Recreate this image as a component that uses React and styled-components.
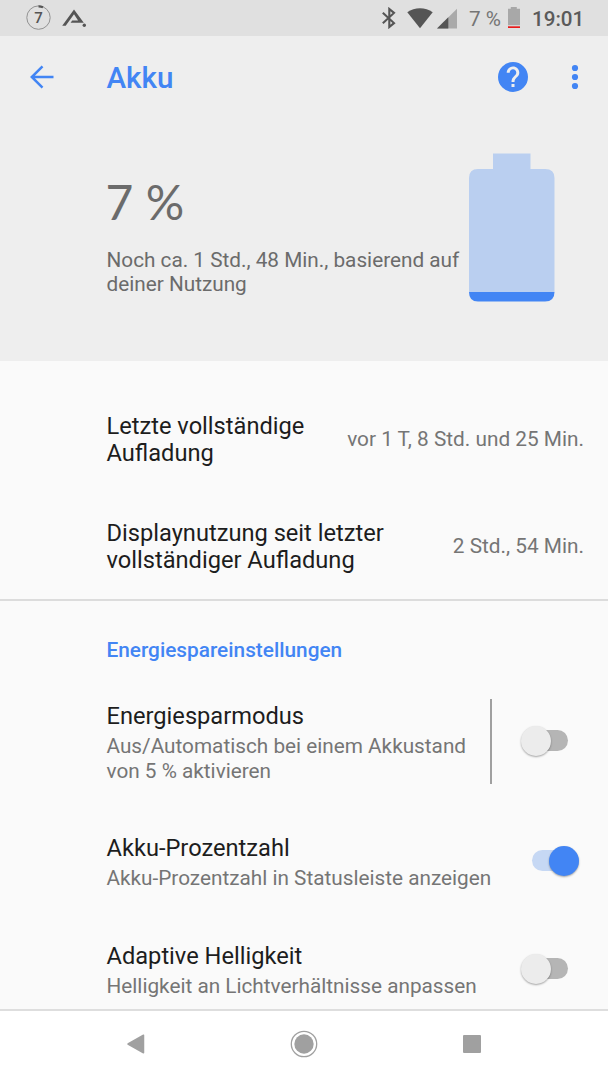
import styled, { createGlobalStyle } from "styled-components";
import { useState } from "react";

const GlobalStyle = createGlobalStyle`
  * {
    box-sizing: border-box;
  }
  body {
    margin: 0;
    background-color: #fafafa;
    font-family: Roboto, "Liberation Sans", sans-serif;
    overflow: hidden;
  }
`;

const Container = styled.div`
  width: 608px;
  height: 1080px;
  display: flex;
  flex-direction: column;
  background-color: #fafafa;
  overflow: hidden;
`;

const StatusBar = styled.div`
  height: 35.5px;
  flex-shrink: 0;
  display: flex;
  align-items: flex-start;
  justify-content: space-between;
  padding: 0 25px 0 26px;
  background-color: #e0e0e0;
  color: #5a5a5a;
`;

const StatusGroup = styled.div`
  height: 36px;
  display: flex;
  align-items: center;
`;

const StatusIcon = styled.svg`
  display: block;
  flex-shrink: 0;
  margin-right: ${(props) => props.$gap || 0}px;
`;

const StatusPercent = styled.span`
  width: 38px;
  font-size: 20.7px;
  line-height: 24px;
  white-space: nowrap;
  color: #757575;
  padding-top: 1px;
`;

const Clock = styled.span`
  width: 51px;
  font-size: 20.6px;
  font-weight: 500;
  line-height: 24px;
  padding-top: 1px;
`;

const Header = styled.header`
  height: 325.5px;
  flex-shrink: 0;
  background-color: #eeeeee;
`;

const Toolbar = styled.div`
  height: 82px;
  display: flex;
  align-items: center;
  padding: 0 20.5px 0 24px;
`;

const IconButton = styled.button`
  width: ${(props) => props.$size || 36}px;
  height: 36px;
  display: flex;
  align-items: center;
  justify-content: center;
  border: none;
  padding: 0;
  background: none;
  color: #4285f4;
  cursor: pointer;
`;

const Title = styled.h1`
  flex: 1;
  margin: 3px 0 0 46.5px;
  font-size: 29.6px;
  font-weight: 500;
  line-height: 36px;
  color: #4285f4;
`;

const Actions = styled.div`
  display: flex;
  gap: 32px;
`;

const Summary = styled.div`
  display: flex;
  justify-content: space-between;
  padding: 35.5px 53px 0 106.5px;
`;

const SummaryText = styled.div`
  width: 360px;
  padding-top: 20px;
`;

const Level = styled.div`
  font-family: Lato, Roboto, sans-serif;
  font-size: 48px;
  line-height: 58px;
  color: #6b6b6b;
  margin-left: -1px;
`;

const Estimate = styled.p`
  margin: 17px 0 0;
  font-size: 20.75px;
  line-height: 24.4px;
  color: #6b6b6b;
`;

const Battery = styled.svg`
  display: block;
  flex-shrink: 0;
`;

const Usage = styled.section`
  height: 240px;
  flex-shrink: 0;
  padding-top: 25px;
  border-bottom: 2px solid #dcdcdc;
`;

const UsageRow = styled.div`
  height: 107px;
  display: flex;
  align-items: center;
  justify-content: space-between;
  padding: 0 24px 0 106.5px;
`;

const UsageLabel = styled.div`
  width: ${(props) => props.$width}px;
  padding-top: 1px;
  font-size: 23.65px;
  line-height: 27.5px;
  color: #1d1d1d;
`;

const UsageValue = styled.div`
  font-size: 20.8px;
  line-height: 24px;
  padding-bottom: 1px;
  white-space: nowrap;
  color: #757575;
`;

const Settings = styled.section`
  flex: 1;
  min-height: 0;
  overflow: hidden;
`;

const SectionTitle = styled.h2`
  margin: 0;
  padding: 37px 0 0 106.5px;
  height: 87px;
  font-size: 20.8px;
  font-weight: 500;
  line-height: 24px;
  color: #4285f4;
`;

const SettingRow = styled.div`
  height: ${(props) => props.$height}px;
  display: flex;
  align-items: center;
  justify-content: space-between;
  padding: 0 24px 0 106.5px;
`;

const SettingText = styled.div`
  flex: 1;
  min-width: 0;
  padding-top: 2px;
`;

const SettingName = styled.div`
  font-size: 23.65px;
  line-height: 28px;
  color: #1d1d1d;
`;

const SettingHint = styled.div`
  margin-top: 4px;
  font-size: 20.75px;
  line-height: 24.3px;
  color: #757575;
`;

const ToggleArea = styled.div`
  height: 85px;
  flex-shrink: 0;
  display: flex;
  align-items: center;
  border-left: 2px solid ${(props) => (props.$divided ? "#a0a0a0" : "transparent")};
`;

const Toggle = styled.button`
  width: ${(props) => (props.$on ? 69 : 76)}px;
  height: 34px;
  display: flex;
  align-items: center;
  justify-content: flex-end;
  margin-right: ${(props) => (props.$on ? 5 : 16)}px;
  border: none;
  padding: 0 0 2px;
  background: none;
  cursor: pointer;
`;

const Track = styled.span`
  width: 47px;
  height: 21px;
  display: flex;
  align-items: center;
  justify-content: ${(props) => (props.$on ? "flex-end" : "flex-start")};
  border-radius: 11px;
  background: ${(props) =>
    props.$on ? "#c6d8f4" : "linear-gradient(90deg, transparent 15px, #b5b5b5 15px)"};
`;

const Thumb = styled.span`
  width: 30px;
  height: 30px;
  flex-shrink: 0;
  border-radius: 50%;
  background-color: ${(props) => (props.$on ? "#4285f4" : "#ececec")};
  box-shadow: 0 1px 2px rgba(0, 0, 0, 0.35);
`;

const NavBar = styled.nav`
  height: 71px;
  flex-shrink: 0;
  display: flex;
  align-items: center;
  justify-content: space-between;
  padding: 0 122px 3px 121px;
  border-top: 2px solid #dedede;
  background-color: #ffffff;
`;

const NavButton = styled.button`
  width: 28px;
  height: 28px;
  border: none;
  padding: 0;
  background: none;
  cursor: pointer;

  svg {
    display: block;
  }
`;

const usage = [
  {
    label: "Letzte vollständige Aufladung",
    value: "vor 1 T, 8 Std. und 25 Min.",
    width: 215,
  },
  {
    label: "Displaynutzung seit letzter vollständiger Aufladung",
    value: "2 Std., 54 Min.",
    width: 300,
  },
];

const settings = [
  {
    id: "saver",
    name: "Energiesparmodus",
    hint: "Aus/Automatisch bei einem Akkustand von 5 % aktivieren",
    height: 107,
    divided: true,
  },
  {
    id: "percent",
    name: "Akku-Prozentzahl",
    hint: "Akku-Prozentzahl in Statusleiste anzeigen",
    height: 133,
  },
  {
    id: "brightness",
    name: "Adaptive Helligkeit",
    hint: "Helligkeit an Lichtverhältnisse anpassen",
    height: 83,
  },
];

const App = () => {
  const [enabled, setEnabled] = useState({ percent: true });

  const handleToggle = (id) => {
    setEnabled({ ...enabled, [id]: !enabled[id] });
  };

  return (
    <Container>
      <GlobalStyle />
      <StatusBar>
        <StatusGroup>
          <StatusIcon width="25" height="26" viewBox="0 0 25 26" $gap={11}>
            <circle cx="12.5" cy="12.6" r="11.7" fill="none" stroke="#929292" strokeWidth="1" />
            <path d="M12.5 1.4A11.4 11.4 0 0 1 17 2.3" fill="none" stroke="#555" strokeWidth="2.2" />
            <text x="12.4" y="17.8" textAnchor="middle" fontSize="15" fontWeight="500" fill="#555">
              7
            </text>
          </StatusIcon>
          <StatusIcon width="25" height="19" viewBox="0 0 25 19">
            <path
              d="M12 .5 21.8 13.8H8.600L10.200 11.400H16.100L12 5.300 3.700 16.800H.2Z"
              fill="#555"
            />
            <circle cx="22.300" cy="16.200" r="1.700" fill="#555" />
          </StatusIcon>
        </StatusGroup>
        <StatusGroup>
          <StatusIcon width="14" height="22" viewBox="0 0 14 22" $gap={11}>
            <path
              d="M.8 5.700 12 16.100 7.300 20V2L12 5.900.8 16.300"
              fill="none"
              stroke="#555"
              strokeWidth="2.100"
            />
          </StatusIcon>
          <StatusIcon width="26" height="21" viewBox="0 0 26 21" $gap={4}>
            <path d="M.3 4.200C7.500-1 18.500-1 25.700 4.200L13 20.300Z" fill="#555" />
          </StatusIcon>
          <StatusIcon width="21" height="21" viewBox="0 0 21 21" $gap={11}>
            <path d="M0 20.500 20 .700V20.500Z" fill="#aaa" />
            <path d="M0 20.500 11.300 9.300V20.500Z" fill="#555" />
          </StatusIcon>
          <StatusPercent>7 %</StatusPercent>
          <StatusIcon width="13" height="22" viewBox="0 0 13 22" $gap={12}>
            <path d="M3.800 0H9.800V1.700H13V18.300H1V1.700H3.800Z" fill="#a8a8a8" />
            <path d="M1 19.300H13V21H1Z" fill="#e81b1b" />
          </StatusIcon>
          <Clock>19:01</Clock>
        </StatusGroup>
      </StatusBar>

      <Header>
        <Toolbar>
          <IconButton>
            <svg width="24" height="24" viewBox="0 0 24 24">
              <path
                d="M23.500 12H2M12.500 1.300 1.800 12 12.500 22.700"
                fill="none"
                stroke="currentColor"
                strokeWidth="2.500"
              />
            </svg>
          </IconButton>
          <Title>Akku</Title>
          <Actions>
            <IconButton>
              <svg width="36" height="36" viewBox="0 0 24 24" fill="currentColor">
                <path
                  fillRule="evenodd"
                  d="M12 2a10 10 0 1 0 0 20 10 10 0 0 0 0-20zM11 16.600h2v2h-2zM11 15.300h2c0-3 3.200-3.300 3.200-6.200C16.200 6.800 14.300 5 12 5S7.800 6.800 7.800 9.100h2C9.800 7.900 10.800 6.900 12 6.900s2.200 1 2.200 2.200C14.200 11.100 11 11.500 11 15.300z"
                />
              </svg>
            </IconButton>
            <IconButton $size={25}>
              <svg width="8" height="26" viewBox="0 0 8 26" fill="currentColor">
                <circle cx="4" cy="4" r="3.100" />
                <circle cx="4" cy="13" r="3.100" />
                <circle cx="4" cy="22" r="3.100" />
              </svg>
            </IconButton>
          </Actions>
        </Toolbar>
        <Summary>
          <SummaryText>
            <Level>7 %</Level>
            <Estimate>Noch ca. 1 Std., 48 Min., basierend auf deiner Nutzung</Estimate>
          </SummaryText>
          <Battery width="86" height="149" viewBox="0 0 86 149">
            <path
              d="M24 .500H61.500V16H76Q85.500 16 85.500 25V139H0V25Q0 16 9 16H24Z"
              fill="#bacff0"
            />
            <path d="M0 139H85.500Q85.500 148.500 76 148.500H9Q0 148.500 0 139Z" fill="#4285f4" />
          </Battery>
        </Summary>
      </Header>

      <Usage>
        {usage.map((item) => (
          <UsageRow key={item.label}>
            <UsageLabel $width={item.width}>{item.label}</UsageLabel>
            <UsageValue>{item.value}</UsageValue>
          </UsageRow>
        ))}
      </Usage>

      <Settings>
        <SectionTitle>Energiespareinstellungen</SectionTitle>
        {settings.map((item) => (
          <SettingRow key={item.id} $height={item.height}>
            <SettingText>
              <SettingName>{item.name}</SettingName>
              <SettingHint>{item.hint}</SettingHint>
            </SettingText>
            <ToggleArea $divided={item.divided}>
              <Toggle $on={enabled[item.id]} onClick={() => handleToggle(item.id)}>
                <Track $on={enabled[item.id]}>
                  <Thumb $on={enabled[item.id]} />
                </Track>
              </Toggle>
            </ToggleArea>
          </SettingRow>
        ))}
      </Settings>

      <NavBar>
        <NavButton>
          <svg width="28" height="28" viewBox="0 0 28 28">
            <path
              d="M7 14 22.500 5.200V22.800Z"
              fill="#a0a0a0"
              stroke="#a0a0a0"
              strokeWidth="1.500"
              strokeLinejoin="round"
            />
          </svg>
        </NavButton>
        <NavButton>
          <svg width="28" height="28" viewBox="0 0 28 28">
            <circle cx="14" cy="14" r="12.700" fill="none" stroke="#a0a0a0" strokeWidth="1.300" />
            <circle cx="14" cy="14" r="9.700" fill="#a0a0a0" />
          </svg>
        </NavButton>
        <NavButton>
          <svg width="28" height="28" viewBox="0 0 28 28">
            <rect x="5" y="5" width="18" height="18" rx="1" fill="#a0a0a0" />
          </svg>
        </NavButton>
      </NavBar>
    </Container>
  );
};

export default App;
